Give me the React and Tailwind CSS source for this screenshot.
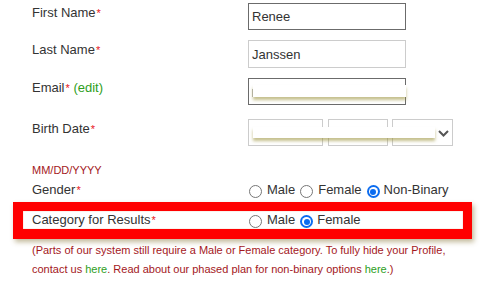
const Star = () => <span className="text-[11px] text-[#e8141b] ml-[1px]">*</span>;

const Radio = ({ checked }) =>
  checked ? (
    <span className="w-[13px] h-[13px] rounded-full bg-[#0b6cf0] flex items-center justify-center shrink-0">
      <span className="w-[9px] h-[9px] rounded-full bg-white flex items-center justify-center">
        <span className="block w-[6px] h-[6px] rounded-full bg-[#0b6cf0]" />
      </span>
    </span>
  ) : (
    <span className="block w-[13px] h-[13px] rounded-full border border-[#767676] bg-white shrink-0" />
  );

const Blur = ({ className }) => (
  <div className={"absolute bg-white shadow-[0_3px_3px_rgba(150,140,50,0.55)] " + className} />
);

export default function App() {
  return (
    <div className="w-[502px] h-[283px] bg-white overflow-hidden pl-[13px] pt-[3px] text-[13px] text-[#333] font-['Liberation_Sans',Arial,sans-serif]">
      {/* First name */}
      <div className="flex pl-[19px]">
        <div className="w-[216px] leading-[19px]">First Name<Star /></div>
        <div className="w-[158px] h-[27px] border border-[#6b6b6b] pl-[3px] flex items-center pt-[1px]">Renee</div>
      </div>
      {/* Last name */}
      <div className="flex pl-[19px] mt-[10px]">
        <div className="w-[216px] leading-[19px]">Last Name<Star /></div>
        <div className="w-[158px] h-[28px] border border-[#cccccc] pl-[3px] flex items-center pt-[1px]">Janssen</div>
      </div>
      {/* Email */}
      <div className="flex pl-[19px] mt-[10px]">
        <div className="w-[216px] leading-[19px]">
          Email<Star /> <span className="text-[#2e9e1c]">(edit)</span>
        </div>
        <div className="relative w-[158px] h-[27px] border border-[#6b6b6b]">
          <div className="absolute left-[3px] top-[10px] w-[1px] h-[8px] bg-[#bbb]" />
          <Blur className="left-[4px] top-[6px] w-[153px] h-[12px]" />
        </div>
      </div>
      {/* Birth date */}
      <div className="flex pl-[19px] mt-[14px]">
        <div className="w-[216px] leading-[19px]">Birth Date<Star /></div>
        <div className="relative flex h-[27px]">
          <div className="w-[75px] h-[27px] border border-[#cccccc]" />
          <div className="w-[60px] h-[27px] border border-[#cccccc] ml-[5px]" />
          <div className="w-[61px] h-[27px] border border-[#cccccc] ml-[4px] flex items-center justify-end pr-[3px]">
            <svg width="11" height="7" viewBox="0 0 11 7" className="mt-[2px]">
              <path d="M1 1 L5.5 5.5 L10 1" fill="none" stroke="#555" strokeWidth="2" />
            </svg>
          </div>
          <Blur className="left-[5px] top-[8px] w-[182px] h-[11px]" />
        </div>
      </div>
      {/* MM/DD/YYYY */}
      <div className="pl-[19px] mt-[15px] leading-[19px] text-[11px] text-[#a3171c]">MM/DD/YYYY</div>
      {/* Gender */}
      <div className="flex pl-[19px]">
        <div className="w-[217px] leading-[19px]">Gender<Star /></div>
        <div className="flex items-start leading-[19px]">
          <span className="block mt-[5px]"><Radio /></span>
          <span className="ml-[5px]">Male</span>
          <span className="block mt-[5px] ml-[5px]"><Radio /></span>
          <span className="ml-[5px]">Female</span>
          <span className="block mt-[5px] ml-[5px]"><Radio checked /></span>
          <span className="ml-[4px]">Non-Binary</span>
        </div>
      </div>
      {/* Category red box */}
      <div className="mt-[2px] w-[459px] h-[37px] border-[#ff0000] border-l-[10px] border-r-[9px] border-t-[9px] border-b-[10px] bg-white shadow-[2px_3px_5px_rgba(120,100,30,0.45)]">
        <div className="flex pl-[9px] h-[18px] shadow-[inset_0_0_1px_rgba(200,120,60,0.9)]">
          <div className="w-[217px] leading-[18px]">Category for Results<Star /></div>
          <div className="flex items-start leading-[18px]">
            <span className="block mt-[4px]"><Radio /></span>
            <span className="ml-[5px]">Male</span>
            <span className="block mt-[4px] ml-[5px]"><Radio checked /></span>
            <span className="ml-[4px]">Female</span>
          </div>
        </div>
      </div>
      {/* Paragraph */}
      <div className="pl-[19px] mt-[2px] leading-[19px] text-[11px] text-[#a3171c] whitespace-nowrap">
        (Parts of our system still require a Male or Female category. To fully hide your Profile,
        <br />
        contact us <span className="text-[#2e9e1c]">here</span>. Read about our phased plan for non-binary options{" "}
        <span className="text-[#2e9e1c]">here</span>.)
      </div>
    </div>
  );
}
